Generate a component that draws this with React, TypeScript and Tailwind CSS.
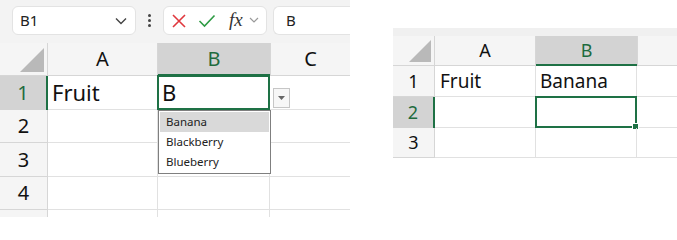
import React from "react";

const font = { fontFamily: '"Noto Sans", "Open Sans", Arial, sans-serif' };

function Corner({ size }: { size: number }) {
  return (
    <svg width={size} height={size} viewBox="0 0 24 24" className="absolute right-[3px] bottom-[3px]">
      <polygon points="24,0 24,24 0,24" fill="#b9b9b9" />
    </svg>
  );
}

function Toolbar() {
  return (
    <div className="h-[43px] bg-[#f3f3f3] flex items-start pt-[6px]">
      {/* name box */}
      <div className="ml-[12px] w-[124px] h-[29px] bg-white rounded-[6px] border border-[#e3e3e3] flex items-center pl-[7px] pr-[8px]">
        <span className="text-[15px] text-[#222] flex-1">B1</span>
        <svg width="12" height="8" viewBox="0 0 12 8">
          <path d="M1 1.5 L6 6.5 L11 1.5" fill="none" stroke="#444" strokeWidth="1.4" />
        </svg>
      </div>
      {/* dots */}
      <div className="w-[27px] h-[29px] flex flex-col items-center justify-center gap-[2px]">
        <div className="w-[3px] h-[3px] rounded-full bg-[#444]" />
        <div className="w-[3px] h-[3px] rounded-full bg-[#444]" />
        <div className="w-[3px] h-[3px] rounded-full bg-[#444]" />
      </div>
      {/* fx buttons */}
      <div className="w-[104px] h-[29px] bg-white rounded-[6px] border border-[#e3e3e3] flex items-center pl-[6px]">
        <svg width="16" height="16" viewBox="0 0 16 16" className="ml-[1px]">
          <path d="M2 2 L14 14 M14 2 L2 14" stroke="#e0383e" strokeWidth="1.6" />
        </svg>
        <svg width="18" height="14" viewBox="0 0 18 14" className="ml-[11px]">
          <path d="M1.5 7 L6.5 12 L16.5 1.5" fill="none" stroke="#2e9b44" strokeWidth="1.6" />
        </svg>
        <span
          className="ml-[13px] text-[19px] italic text-[#333] leading-none -mt-[2px]"
          style={{ fontFamily: '"Liberation Serif", "DejaVu Serif", serif' }}
        >
          fx
        </span>
        <svg width="10" height="7" viewBox="0 0 10 7" className="ml-[6px]">
          <path d="M1 1 L5 5 L9 1" fill="none" stroke="#9a9a9a" strokeWidth="1.2" />
        </svg>
      </div>
      {/* formula input */}
      <div className="ml-[6px] flex-1 h-[29px] bg-white rounded-l-[6px] border border-r-0 border-[#e3e3e3] flex items-center pl-[12px]">
        <span className="text-[15px] text-[#222]">B</span>
      </div>
    </div>
  );
}

function LeftSheet() {
  const rowH = [34, 33, 34, 33];
  return (
    <div className="w-[350px] h-[217px] overflow-hidden" style={font}>
      <Toolbar />
      <div className="relative">
        {/* header row */}
        <div className="flex h-[33px]">
          <div className="relative w-[48px] bg-[#f5f5f5] border-r border-b border-[#d6d6d6]">
            <Corner size={24} />
          </div>
          <div className="w-[110px] bg-[#f5f5f5] border-r border-b border-[#d6d6d6] flex items-center justify-center text-[20px] text-[#111]">
            A
          </div>
          <div className="w-[112px] bg-[#d3d3d3] border-b-2 border-[#1e7145] flex items-center justify-center text-[20px] text-[#1e6b3e]">
            B
          </div>
          <div className="flex-1 bg-[#f5f5f5] border-l border-b border-[#d6d6d6] flex items-center justify-center text-[20px] text-[#111]">
            C
          </div>
        </div>
        {rowH.map((h, i) => (
          <div key={i} className="flex" style={{ height: h }}>
            <div
              className={
                i === 0
                  ? "w-[48px] bg-[#d3d3d3] border-r-2 border-[#1e7145] flex items-center justify-center text-[20px] text-[#1e6b3e]"
                  : "w-[48px] bg-[#f5f5f5] border-r border-b border-[#d6d6d6] flex items-center justify-center text-[20px] text-[#111]"
              }
            >
              {i + 1}
            </div>
            <div className="w-[110px] border-r border-b border-[#e1e1e1] flex items-center pl-[4px] text-[22px] text-[#111]">
              {i === 0 ? "Fruit" : ""}
            </div>
            <div className="relative w-[112px] border-r border-b border-[#e1e1e1] flex items-center pl-[4px] text-[22px] text-[#111]">
              {i === 0 && (
                <>
                  <span>B</span>
                  <div className="absolute -left-[1px] -top-[1px] -right-[1px] -bottom-[1px] border-2 border-[#1e7145]" />
                </>
              )}
            </div>
            <div className="flex-1 border-b border-[#e1e1e1]" />
          </div>
        ))}
        <div className="flex h-[10px]">
          <div className="w-[48px] bg-[#f5f5f5] border-r border-[#d6d6d6]" />
          <div className="w-[110px] border-r border-[#e1e1e1]" />
          <div className="w-[112px] border-r border-[#e1e1e1]" />
        </div>

        {/* dropdown button */}
        <div className="absolute left-[273px] top-[45px] w-[17px] h-[20px] bg-[#f7f7f7] border border-[#c6c6c6] flex items-center justify-center">
          <svg width="7" height="4" viewBox="0 0 7 4">
            <polygon points="0,0 7,0 3.5,4" fill="#666" />
          </svg>
        </div>
        {/* dropdown list */}
        <div className="absolute left-[158px] top-[67px] w-[113px] h-[64px] bg-white border border-[#7f7f7f] p-[1px] text-[11.5px] text-[#222]">
          <div className="h-[20px] bg-[#d9d9d9] flex items-center pl-[6px]">Banana</div>
          <div className="h-[20px] flex items-center pl-[6px]">Blackberry</div>
          <div className="h-[20px] flex items-center pl-[6px]">Blueberry</div>
        </div>
      </div>
    </div>
  );
}

function RightSheet() {
  const rowH = [31, 31, 30];
  return (
    <div className="mt-[28px] w-[284px]" style={font}>
      <div className="h-[8px] bg-[#f0f0f0]" />
      <div className="flex h-[30px]">
        <div className="relative w-[42px] bg-[#f5f5f5] border-r border-b border-[#d6d6d6]">
          <Corner size={22} />
        </div>
        <div className="w-[101px] bg-[#f5f5f5] border-r border-b border-[#d6d6d6] flex items-center justify-center text-[18px] text-[#111]">
          A
        </div>
        <div className="w-[101px] bg-[#d3d3d3] border-b-2 border-[#1e7145] flex items-center justify-center text-[18px] text-[#1e6b3e]">
          B
        </div>
        <div className="flex-1 bg-[#f5f5f5] border-l border-b border-[#d6d6d6]" />
      </div>
      {rowH.map((h, i) => (
        <div key={i} className="flex" style={{ height: h }}>
          <div
            className={
              i === 1
                ? "w-[42px] bg-[#d3d3d3] border-r-2 border-[#1e7145] flex items-center justify-center text-[18px] text-[#1e6b3e]"
                : "w-[42px] bg-[#f5f5f5] border-r border-b border-[#d6d6d6] flex items-center justify-center text-[18px] text-[#111]"
            }
          >
            {i + 1}
          </div>
          <div className="w-[101px] border-r border-b border-[#e1e1e1] flex items-center pl-[5px] text-[19px] text-[#111]">
            {i === 0 ? "Fruit" : ""}
          </div>
          <div className="relative w-[101px] border-r border-b border-[#e1e1e1] flex items-center pl-[4px] text-[19px] text-[#111]">
            {i === 0 && "Banana"}
            {i === 1 && (
              <>
                <div className="absolute -left-[1px] -top-[1px] -right-[1px] -bottom-[1px] border-2 border-[#1e7145]" />
                <div className="absolute -right-[3px] -bottom-[3px] w-[5px] h-[5px] bg-[#1e7145] border border-white box-content" />
              </>
            )}
          </div>
          <div className="flex-1 border-b border-[#e1e1e1]" />
        </div>
      ))}
    </div>
  );
}

export default function App() {
  return (
    <div className="w-[677px] h-[217px] bg-white flex items-start gap-[43px] overflow-hidden">
      <LeftSheet />
      <RightSheet />
    </div>
  );
}
